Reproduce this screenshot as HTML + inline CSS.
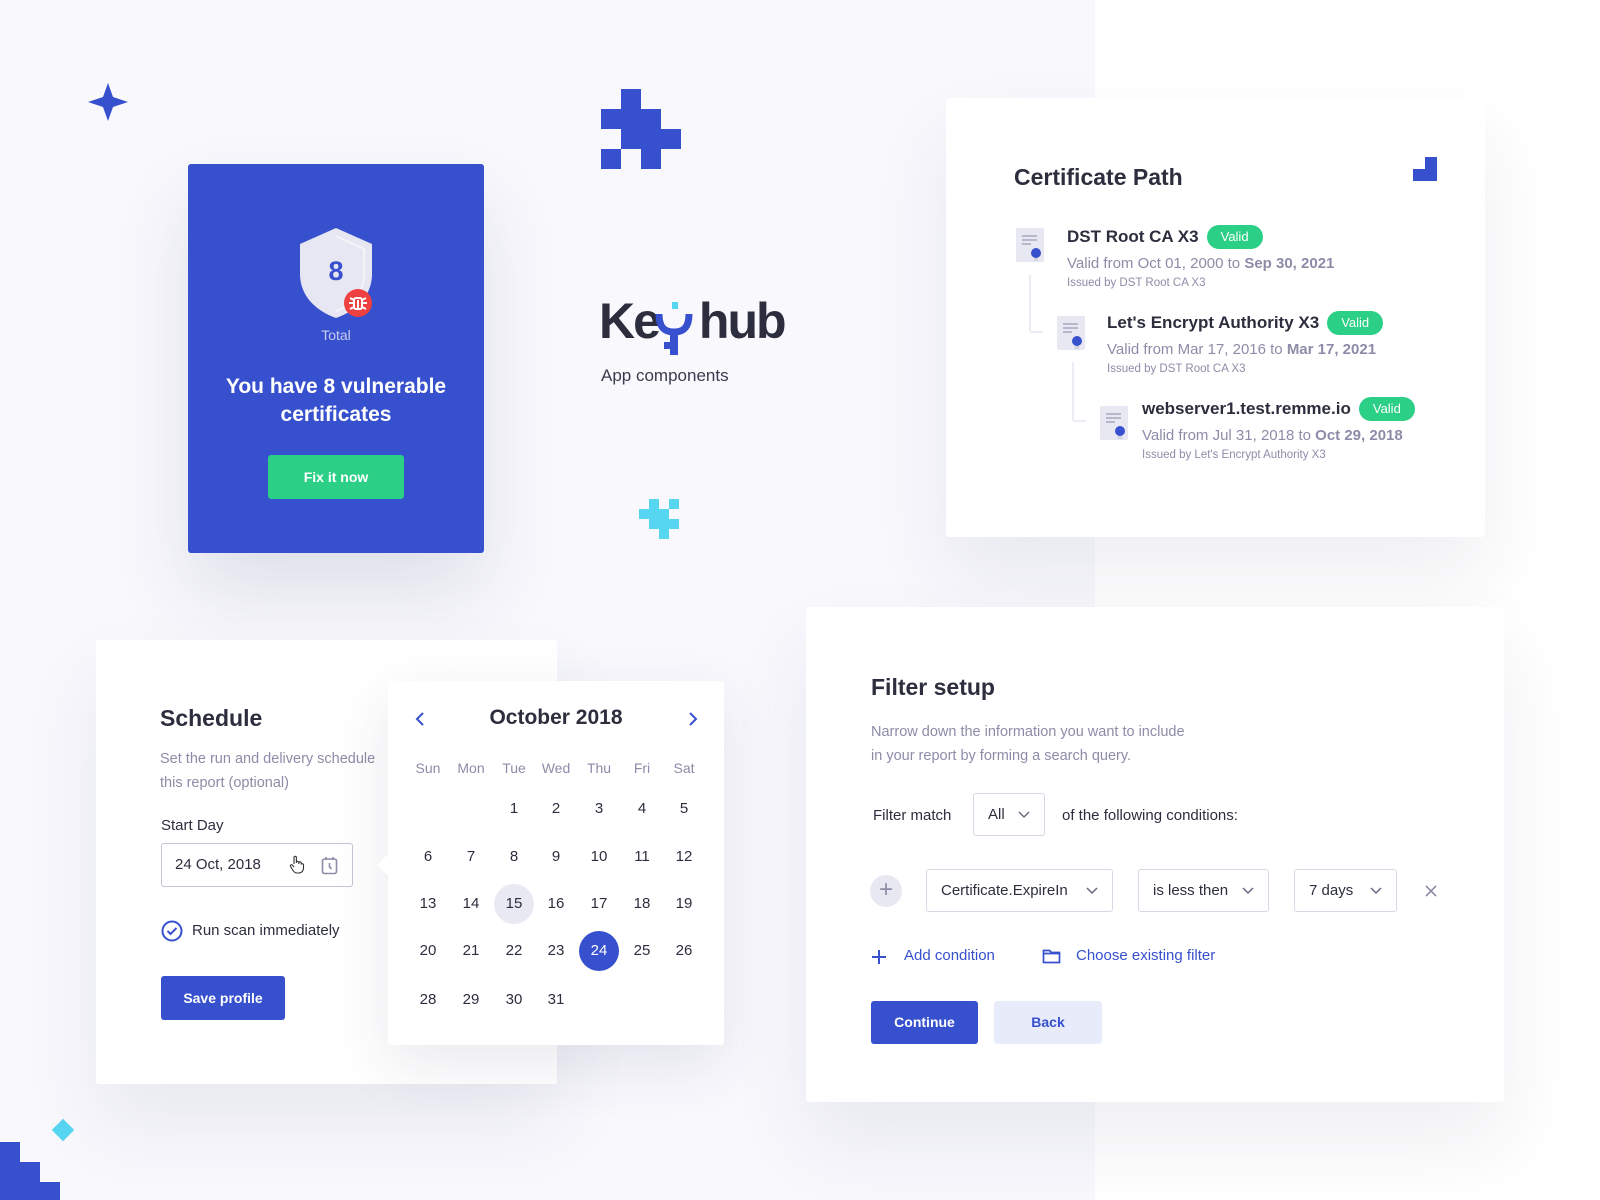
<!DOCTYPE html>
<html><head><meta charset="utf-8"><style>
*{margin:0;padding:0;box-sizing:border-box}
body{width:1600px;height:1200px;position:relative;overflow:hidden;background:#fff;font-family:"Liberation Sans",sans-serif;color:#2c2e3e}
.a{position:absolute}
.card{position:absolute;background:#fff;border-radius:3px;box-shadow:0 40px 80px rgba(50,50,90,.08)}
.b{background:#3750cd}
.t{position:absolute;white-space:nowrap}
.h{font-weight:bold;font-size:23px;color:#2c2e3e}
.g{color:#8d8ca8}
.dd{position:absolute;border:1px solid #d8d8e4;border-radius:3px;background:#fff;font-size:15px;color:#2c2e3e;display:flex;align-items:center;padding-left:14px}
.dd svg{position:absolute;right:14px;top:50%;margin-top:-4px}
.badge{display:inline-block;height:24px;border-radius:12px;background:#2bcf86;color:#fff;font-size:13px;font-weight:normal;text-align:center;line-height:24px;width:56px;margin-left:8px;vertical-align:middle}
.nm{position:absolute;white-space:nowrap;font-size:17px;font-weight:bold;display:flex;align-items:center}
.cal span{position:absolute;width:40px;height:40px;margin-left:-20px;margin-top:-20px;text-align:center;line-height:40px;font-size:15px;color:#2c2e3e;border-radius:50%}
.wd span{position:absolute;width:40px;margin-left:-20px;text-align:center;font-size:14px;color:#8d8ca8}
</style></head><body>
<div class="a" style="left:0;top:0;width:1095px;height:1200px;background:#f8f8fd"></div>

<svg class="a" style="left:88px;top:83px" width="40" height="38" viewBox="0 0 40 38"><path d="M20 0 L25 14 L40 19 L25 24 L20 38 L15 24 L0 19 L15 14Z" fill="#3750cd"/></svg>
<div class="a b" style="left:621px;top:89px;width:20px;height:20px"></div>
<div class="a b" style="left:601px;top:109px;width:60px;height:20px"></div>
<div class="a b" style="left:621px;top:129px;width:60px;height:20px"></div>
<div class="a b" style="left:601px;top:149px;width:20px;height:20px"></div>
<div class="a b" style="left:641px;top:149px;width:20px;height:20px"></div>
<div class="a" style="left:649px;top:499px;width:10px;height:10px;background:#57d6f1"></div>
<div class="a" style="left:669px;top:499px;width:10px;height:10px;background:#57d6f1"></div>
<div class="a" style="left:639px;top:509px;width:30px;height:10px;background:#57d6f1"></div>
<div class="a" style="left:649px;top:519px;width:30px;height:10px;background:#57d6f1"></div>
<div class="a" style="left:659px;top:529px;width:10px;height:10px;background:#57d6f1"></div>
<div class="a" style="left:52px;top:1119px;width:22px;height:22px;background:#57d6f1;transform:rotate(45deg) scale(.72)"></div>
<div class="a b" style="left:0;top:1142px;width:20px;height:58px"></div>
<div class="a b" style="left:20px;top:1162px;width:20px;height:38px"></div>
<div class="a b" style="left:40px;top:1182px;width:20px;height:18px"></div>

<div class="a b" style="left:188px;top:164px;width:296px;height:389px;border-radius:3px;box-shadow:0 40px 80px rgba(50,50,90,.12)"></div>
<svg class="a" style="left:296px;top:226px" width="80" height="95" viewBox="0 0 80 95"><path d="M40 2 L76 18 L76 48 C76 70 60 85 40 92 C20 85 4 70 4 48 L4 18Z" fill="#e6e7f2"/><path d="M40 10 L68 23 L68 48 C68 66 56 79 40 85" fill="none" stroke="#fff" stroke-width="1.5" opacity=".7"/></svg>
<div class="t" style="left:316px;top:256px;width:40px;text-align:center;font-size:27px;font-weight:bold;color:#3750cd">8</div>
<svg class="a" style="left:344px;top:289px" width="28" height="28" viewBox="0 0 28 28"><circle cx="14" cy="14" r="14" fill="#ee4040"/><g stroke="#fff" stroke-width="2" fill="none"><rect x="10" y="9" width="8" height="11" rx="2"/><path d="M6 9l4 2M22 9l-4 2M5 14h5M23 14h-5M6 20l4-2M22 20l-4-2M14 11v9"/></g></svg>
<div class="t" style="left:296px;top:327px;width:80px;text-align:center;font-size:14px;color:#c8cdf2">Total</div>
<div class="t" style="left:188px;top:373px;width:296px;text-align:center;font-size:21px;font-weight:bold;color:#fff;line-height:28px;white-space:normal">You have 8 vulnerable<br>certificates</div>
<div class="a" style="left:268px;top:455px;width:136px;height:44px;background:#2bcf86;border-radius:3px;color:#fff;font-weight:bold;font-size:14px;text-align:center;line-height:44px">Fix it now</div>

<div class="t" style="left:599px;top:292px;font-size:50px;font-weight:bold;color:#2c2e3e;letter-spacing:-2px">Ke<span style="display:inline-block;width:40px"></span>hub</div>
<svg class="a" style="left:654px;top:302px" width="42" height="56" viewBox="0 0 42 56"><rect x="18" y="0" width="6" height="7" fill="#57d6f1"/><path d="M5 12 C5 26 11 30 20 30 C29 30 35 26 35 12" fill="none" stroke="#3750cd" stroke-width="7"/><rect x="16" y="29" width="8" height="24" fill="#3750cd"/><rect x="10" y="40" width="8" height="7" fill="#3750cd"/></svg>
<div class="t" style="left:601px;top:366px;font-size:17px;color:#3a3c4e">App components</div>

<div class="card" style="left:946px;top:98px;width:539px;height:439px"></div>
<div class="t h" style="left:1014px;top:164px">Certificate Path</div>
<div class="a b" style="left:1413px;top:169px;width:12px;height:12px"></div>
<div class="a b" style="left:1425px;top:157px;width:12px;height:24px"></div>
<div class="a" style="left:1029px;top:275px;width:14px;height:58px;border-left:2px solid #ececf4;border-bottom:2px solid #ececf4;border-bottom-left-radius:3px"></div>
<div class="a" style="left:1072px;top:362px;width:14px;height:60px;border-left:2px solid #ececf4;border-bottom:2px solid #ececf4;border-bottom-left-radius:3px"></div>

<svg width="0" height="0" style="position:absolute"><defs><g id="ci"><rect x="0" y="0" width="28" height="34" rx="2" fill="#e8e8f2"/><path d="M6 8h15M6 12h15M6 16h9" stroke="#a8a8c0" stroke-width="1.5"/><path d="M18 26 v8 l2-2 l2 2 v-8" fill="#d0d0de"/><circle cx="20" cy="25" r="5" fill="#3750cd"/></g></defs></svg>
<svg class="a" style="left:1016px;top:228px" width="30" height="40"><use href="#ci"/></svg>
<svg class="a" style="left:1057px;top:316px" width="30" height="40"><use href="#ci"/></svg>
<svg class="a" style="left:1100px;top:406px" width="30" height="40"><use href="#ci"/></svg>

<div class="nm" style="left:1067px;top:225px">DST Root CA X3<span class="badge">Valid</span></div>
<div class="t g" style="left:1067px;top:255px;font-size:15px">Valid from Oct 01, 2000 to <b>Sep 30, 2021</b></div>
<div class="t g" style="left:1067px;top:277px;font-size:11.5px">Issued by DST Root CA X3</div>

<div class="nm" style="left:1107px;top:311px">Let's Encrypt Authority X3<span class="badge">Valid</span></div>
<div class="t g" style="left:1107px;top:341px;font-size:15px">Valid from Mar 17, 2016 to <b>Mar 17, 2021</b></div>
<div class="t g" style="left:1107px;top:363px;font-size:11.5px">Issued by DST Root CA X3</div>

<div class="nm" style="left:1142px;top:397px">webserver1.test.remme.io<span class="badge">Valid</span></div>
<div class="t g" style="left:1142px;top:427px;font-size:15px">Valid from Jul 31, 2018 to <b>Oct 29, 2018</b></div>
<div class="t g" style="left:1142px;top:449px;font-size:11.5px">Issued by Let's Encrypt Authority X3</div>

<div class="card" style="left:96px;top:640px;width:461px;height:444px"></div>
<div class="t h" style="left:160px;top:705px">Schedule</div>
<div class="t g" style="left:160px;top:747px;font-size:14.5px;line-height:24px">Set the run and delivery schedule<br>this report (optional)</div>
<div class="t" style="left:161px;top:817px;font-size:15px">Start Day</div>
<div class="a" style="left:161px;top:843px;width:192px;height:44px;border:1px solid #c4c4d4;border-radius:3px;background:#fff"></div>
<div class="t" style="left:175px;top:856px;font-size:15px">24 Oct, 2018</div>
<svg class="a" style="left:289px;top:855px" width="16" height="19" viewBox="0 0 16 19"><path d="M5 9V2.5a1.2 1.2 0 0 1 2.4 0V8 M7.4 7.5a1.2 1.2 0 0 1 2.4 0V9 M9.8 8a1.2 1.2 0 0 1 2.4 0v1.5 M12.2 9.5a1.2 1.2 0 0 1 2.3 0V13c0 3-2 5-5 5H8c-2 0-3-1-4-2.5L1.5 11.5a1.2 1.2 0 0 1 2-1.3L5 12" fill="#fff" stroke="#333" stroke-width="1.1"/></svg>
<svg class="a" style="left:321px;top:856px" width="17" height="19" viewBox="0 0 17 19"><rect x="1.5" y="3" width="14" height="14.5" rx="2" fill="none" stroke="#8d8ca8" stroke-width="1.6"/><path d="M5 1v3M12 1v3M8.5 7v4l2 2" stroke="#8d8ca8" stroke-width="1.6" fill="none"/></svg>
<svg class="a" style="left:161px;top:920px" width="22" height="22" viewBox="0 0 22 22"><circle cx="11" cy="11" r="9.5" fill="none" stroke="#3750cd" stroke-width="2"/><path d="M6.5 11l3 3 6-6" fill="none" stroke="#3750cd" stroke-width="2"/></svg>
<div class="t" style="left:192px;top:922px;font-size:15px">Run scan immediately</div>
<div class="a b" style="left:161px;top:976px;width:124px;height:44px;border-radius:3px;color:#fff;font-weight:bold;font-size:14px;text-align:center;line-height:44px">Save profile</div>

<div class="card" style="left:388px;top:681px;width:336px;height:364px;box-shadow:0 20px 60px rgba(50,50,90,.1)"></div>
<div class="a" style="left:380px;top:858px;width:14px;height:14px;background:#fff;transform:rotate(45deg)"></div>
<svg class="a" style="left:415px;top:711px" width="10" height="16"><path d="M8 2L2 8l6 6" fill="none" stroke="#3750cd" stroke-width="2"/></svg>
<svg class="a" style="left:688px;top:711px" width="10" height="16"><path d="M2 2l6 6-6 6" fill="none" stroke="#3750cd" stroke-width="2"/></svg>
<div class="t" style="left:456px;top:706px;width:200px;text-align:center;font-size:21px;font-weight:bold">October 2018</div>
<div class="wd"><span class="a" style="left:428px;top:760px">Sun</span><span class="a" style="left:471px;top:760px">Mon</span><span class="a" style="left:514px;top:760px">Tue</span><span class="a" style="left:556px;top:760px">Wed</span><span class="a" style="left:599px;top:760px">Thu</span><span class="a" style="left:642px;top:760px">Fri</span><span class="a" style="left:684px;top:760px">Sat</span></div>
<div class="cal">
<span style="left:514px;top:809px">1</span><span style="left:556px;top:809px">2</span><span style="left:599px;top:809px">3</span><span style="left:642px;top:809px">4</span><span style="left:684px;top:809px">5</span>
<span style="left:428px;top:857px">6</span><span style="left:471px;top:857px">7</span><span style="left:514px;top:857px">8</span><span style="left:556px;top:857px">9</span><span style="left:599px;top:857px">10</span><span style="left:642px;top:857px">11</span><span style="left:684px;top:857px">12</span>
<span style="left:428px;top:904px">13</span><span style="left:471px;top:904px">14</span><span style="left:514px;top:904px;background:#e9e9f3">15</span><span style="left:556px;top:904px">16</span><span style="left:599px;top:904px">17</span><span style="left:642px;top:904px">18</span><span style="left:684px;top:904px">19</span>
<span style="left:428px;top:951px">20</span><span style="left:471px;top:951px">21</span><span style="left:514px;top:951px">22</span><span style="left:556px;top:951px">23</span><span style="left:599px;top:951px;background:#3750cd;color:#fff">24</span><span style="left:642px;top:951px">25</span><span style="left:684px;top:951px">26</span>
<span style="left:428px;top:1000px">28</span><span style="left:471px;top:1000px">29</span><span style="left:514px;top:1000px">30</span><span style="left:556px;top:1000px">31</span>
</div>

<div class="card" style="left:806px;top:607px;width:698px;height:495px"></div>
<div class="t h" style="left:871px;top:674px">Filter setup</div>
<div class="t g" style="left:871px;top:720px;font-size:14.5px;line-height:24px">Narrow down the information you want to include<br>in your report by forming a search query.</div>
<div class="t" style="left:873px;top:807px;font-size:15px">Filter match</div>
<div class="dd" style="left:973px;top:793px;width:72px;height:43px">All<svg width="12" height="8"><path d="M1 1l5 5 5-5" fill="none" stroke="#6a6a80" stroke-width="1.5"/></svg></div>
<div class="t" style="left:1062px;top:807px;font-size:15px">of the following conditions:</div>
<div class="a" style="left:870px;top:875px;width:32px;height:32px;border-radius:50%;background:#e8e8f2"></div>
<div class="t" style="left:876px;top:874px;font-size:24px;color:#8d8ca8;line-height:32px;width:20px;text-align:center">+</div>
<div class="dd" style="left:926px;top:869px;width:187px;height:43px">Certificate.ExpireIn<svg width="12" height="8"><path d="M1 1l5 5 5-5" fill="none" stroke="#6a6a80" stroke-width="1.5"/></svg></div>
<div class="dd" style="left:1138px;top:869px;width:131px;height:43px">is less then<svg width="12" height="8"><path d="M1 1l5 5 5-5" fill="none" stroke="#6a6a80" stroke-width="1.5"/></svg></div>
<div class="dd" style="left:1294px;top:869px;width:103px;height:43px">7 days<svg width="12" height="8"><path d="M1 1l5 5 5-5" fill="none" stroke="#6a6a80" stroke-width="1.5"/></svg></div>
<svg class="a" style="left:1425px;top:885px" width="12" height="12"><path d="M1 1l10 10M11 1L1 11" stroke="#8d8ca8" stroke-width="1.6"/></svg>
<svg class="a" style="left:871px;top:949px" width="16" height="16"><path d="M8 1v14M1 8h14" stroke="#3750cd" stroke-width="2"/></svg>
<div class="t" style="left:904px;top:947px;font-size:15px;color:#3750cd">Add condition</div>
<svg class="a" style="left:1042px;top:947px" width="19" height="17"><path d="M1.5 3.5v12h16v-10h-8l-2-2z M1.5 6.5h16" fill="none" stroke="#3750cd" stroke-width="1.7"/></svg>
<div class="t" style="left:1076px;top:947px;font-size:15px;color:#3750cd">Choose existing filter</div>
<div class="a b" style="left:871px;top:1001px;width:107px;height:43px;border-radius:3px;color:#fff;font-weight:bold;font-size:14px;text-align:center;line-height:43px">Continue</div>
<div class="a" style="left:994px;top:1001px;width:108px;height:43px;border-radius:3px;background:#e8ebfa;color:#3750cd;font-weight:bold;font-size:14px;text-align:center;line-height:43px">Back</div>
</body></html>
